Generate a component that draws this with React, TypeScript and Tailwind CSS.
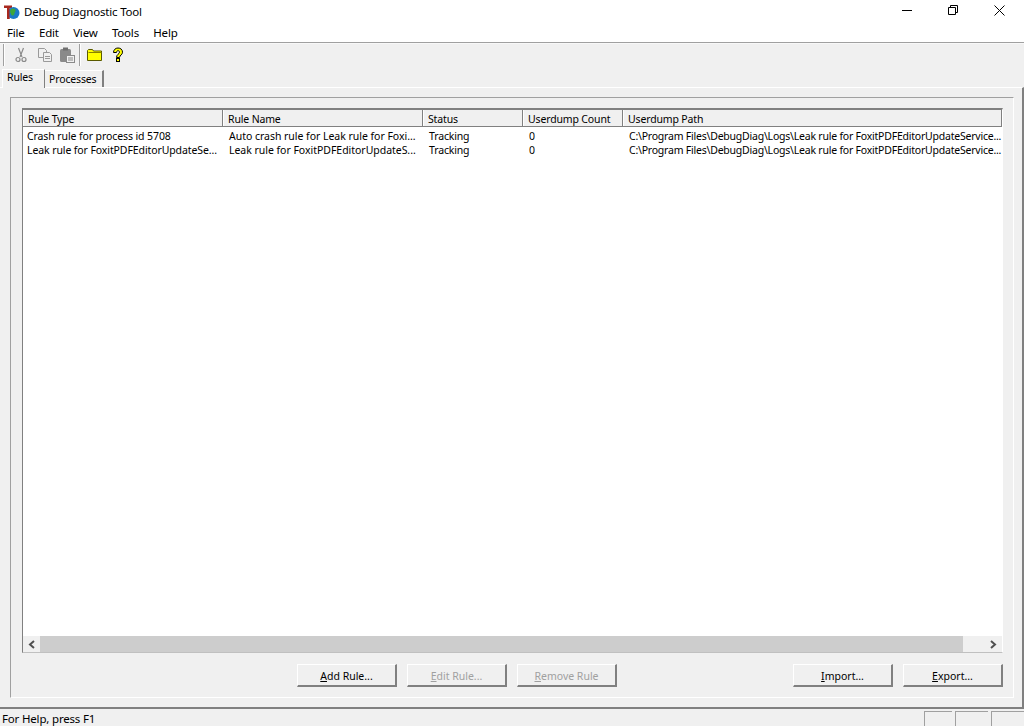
import React from "react";

const columns = [
  { label: "Rule Type", width: "w-[200px]", cell: "pl-[4px] tracking-[-0.1px]" },
  { label: "Rule Name", width: "w-[200px]", cell: "pl-[6px] tracking-[-0.03px]" },
  { label: "Status", width: "w-[100px]", cell: "pl-[6px]" },
  { label: "Userdump Count", width: "w-[100px]", cell: "pl-[6px]" },
  { label: "Userdump Path", width: "w-[379px]", cell: "pl-[6px] tracking-[-0.22px]" },
];

const rows = [
  [
    "Crash rule for process id 5708",
    "Auto crash rule for Leak rule for Foxi...",
    "Tracking",
    "0",
    "C:\\Program Files\\DebugDiag\\Logs\\Leak rule for FoxitPDFEditorUpdateService...",
  ],
  [
    "Leak rule for FoxitPDFEditorUpdateSe...",
    "Leak rule for FoxitPDFEditorUpdateS...",
    "Tracking",
    "0",
    "C:\\Program Files\\DebugDiag\\Logs\\Leak rule for FoxitPDFEditorUpdateService...",
  ],
];

const AppIcon = () => (
  <svg width="18" height="18" viewBox="0 0 18 18">
    <path d="M2 2.500h8v2.500H7.500V16H5V5H2z" fill="#a8281e" />
    <circle cx="11.500" cy="10" r="6" fill="#1c78c8" />
    <path d="M8.500 6.500c2-1.500 4.500-1 5 .500s-1 2-1 3.500-2 3-3 1.500-2-4-1-5.500z" fill="#3da63a" />
    <path d="M5 5h2.500v11H5z" fill="#a8281e" />
  </svg>
);

const CutIcon = () => (
  <svg width="16" height="16" viewBox="0 0 16 16" fill="none" stroke="#8a8a8a" strokeWidth="1.200">
    <path d="M5.500 1l3.500 9M10.500 1L7 10" />
    <circle cx="5" cy="12.500" r="2" />
    <circle cx="11" cy="12.500" r="2" />
  </svg>
);

const CopyIcon = () => (
  <svg width="16" height="16" viewBox="0 0 16 16" fill="#f0f0f0" stroke="#9a9a9a">
    <path d="M1.500 1.500h6l2 2v7h-8z" />
    <path d="M6.500 5.500h6l2 2v7h-8z" />
    <path d="M8 9.500h5M8 11.500h5" strokeWidth="1" />
  </svg>
);

const PasteIcon = () => (
  <svg width="16" height="16" viewBox="0 0 16 16">
    <rect x="1" y="2" width="11" height="13" rx="1.500" fill="#8a8a8a" />
    <rect x="4" y="0.500" width="5" height="3" fill="#6e6e6e" />
    <rect x="7.500" y="8.500" width="8" height="7" fill="#f0f0f0" stroke="#8a8a8a" />
    <path d="M9 11h5M9 13h5" stroke="#8a8a8a" />
  </svg>
);

const FolderIcon = () => (
  <svg width="16" height="12" viewBox="0 0 16 12">
    <path d="M.5 11.500v-10l1-1h4l1 1.500h8v9.500z" fill="#ffff00" stroke="#5a5a00" />
    <path d="M1.500 3.500h13" stroke="#8a8200" />
  </svg>
);

const HelpIcon = () => (
  <svg width="12" height="16" viewBox="0 0 12 16">
    <path
      d="M1.500 5.500C1.500 2.800 3.500 1 6 1s4.500 1.500 4.500 4.200S7.800 8 7.500 10.500h-3c0-3.200 3-3.500 3-5.300 0-1-.6-1.500-1.500-1.500s-1.500.8-1.500 1.800z"
      fill="#ffff00"
      stroke="#000"
    />
    <rect x="4.500" y="11.500" width="3" height="3" fill="#ffff00" stroke="#000" />
  </svg>
);

const Separator = () => (
  <div className="w-[2px] h-[22px] border-l border-[#a0a0a0] border-r-1 border-r-white" />
);

const Button = ({
  hot,
  rest,
  disabled,
}: {
  hot: string;
  rest: string;
  disabled?: boolean;
}) => (
  <div
    className={`w-[100px] h-[23px] flex items-center justify-center pt-[4px] tracking-normal bg-[#f0f0f0] border-t border-l border-white border-r-2 border-b-2 border-r-[#808080] border-b-[#808080] ${
      disabled ? "text-[#a0a0a0]" : "text-black"
    }`}
  >
    <span>
      <span className="underline">{hot}</span>
      {rest}
    </span>
  </div>
);

export default function App() {
  return (
    <div className="w-[1024px] h-[726px] overflow-hidden flex flex-col bg-[#f0f0f0] text-[10.5px] tracking-[-0.15px] text-black font-['Noto_Sans',sans-serif]">
      <div className="h-[24px] shrink-0 bg-white flex items-center">
        <div className="ml-[2px] w-[21px] flex">
          <AppIcon />
        </div>
        <span className="text-[11.5px] tracking-[-0.18px] ml-[1px]">Debug Diagnostic Tool</span>
        <div className="ml-auto flex items-center pr-[2px]">
          <div className="w-[46px] h-[24px] pb-[4px] flex items-center justify-center">
            <div className="w-[10px] h-[1px] bg-black" />
          </div>
          <div className="w-[46px] h-[24px] pb-[4px] flex items-center justify-center">
            <svg width="10" height="10" viewBox="0 0 10 10" fill="none" stroke="#000">
              <path d="M.5 2.500h7v7h-7zM2.500 2.500v-2h7v7h-2" />
            </svg>
          </div>
          <div className="w-[46px] h-[24px] pb-[4px] flex items-center justify-center">
            <svg width="11" height="11" viewBox="0 0 11 11" fill="none" stroke="#000">
              <path d="M.5.500l10 10M10.500.500l-10 10" />
            </svg>
          </div>
        </div>
      </div>

      <div className="h-[18px] shrink-0 bg-white flex items-center text-[11.5px] tracking-[-0.18px] pl-[7px] gap-[14.3px]">
        <span>File</span>
        <span>Edit</span>
        <span>View</span>
        <span>Tools</span>
        <span>Help</span>
      </div>
      <div className="h-[2px] shrink-0 bg-[#a0a0a0] border-b border-[#f8f8f8]" />

      <div className="h-[24px] shrink-0 flex items-center pl-[3px] pb-[2px]">
        <Separator />
        <div className="ml-[8px] flex"><CutIcon /></div>
        <div className="ml-[8px] flex"><CopyIcon /></div>
        <div className="ml-[6px] flex"><PasteIcon /></div>
        <div className="ml-[4px]"><Separator /></div>
        <div className="ml-[6px] flex"><FolderIcon /></div>
        <div className="ml-[9px] flex"><HelpIcon /></div>
      </div>

      <div className="h-[19px] shrink-0 flex items-end pl-[2px] relative z-10">
        <div className="w-[43px] h-[19px] pl-[4px] leading-[14px] bg-[#f0f0f0] border-t border-l border-white border-r border-r-[#808080] -mb-[1px]">
          Rules
        </div>
        <div className="w-[59px] h-[17px] pl-[4px] pt-[1px] border-t border-white border-r-2 border-r-[#808080] flex items-center whitespace-nowrap">
          Processes
        </div>
      </div>

      <div className="flex-1 min-h-0 border-t border-white border-r-2 border-r-[#808080] border-b-2 border-b-[#808080] pl-[10px] pr-[8px] pt-[9px] pb-[9px] flex">
        <div className="flex-1 min-w-0 border-t border-l border-[#a0a0a0] border-r border-b border-r-white border-b-white pl-[11px] pr-[10px] pt-[10px] flex flex-col">
          <div className="h-[545px] shrink-0 border-t-2 border-t-[#808080] border-l border-l-[#808080] border-r border-r-white border-b border-b-[#c0c0c0] bg-white flex flex-col">
            <div className="h-[17px] shrink-0 flex bg-[#f0f0f0] border-b border-[#808080]">
              {columns.map((c) => (
                <div
                  key={c.label}
                  className={`${c.width} shrink-0 pl-[4px] pt-[4px] flex items-center border-l border-white border-r border-r-[#808080] whitespace-nowrap`}
                >
                  {c.label}
                </div>
              ))}
            </div>
            <div className="flex-1 min-h-0 pt-[3px]">
              {rows.map((row, i) => (
                <div key={i} className="h-[14px] flex items-center">
                  {row.map((cell, j) => (
                    <div
                      key={j}
                      className={`${columns[j].width} ${columns[j].cell} shrink-0 whitespace-nowrap`}
                    >
                      {cell}
                    </div>
                  ))}
                </div>
              ))}
            </div>
            <div className="h-[16px] shrink-0 flex bg-[#f0f0f0]">
              <div className="w-[17px] flex items-center justify-center">
                <svg width="8" height="9" viewBox="0 0 8 9" fill="none" stroke="#505050" strokeWidth="2">
                  <path d="M6 1L2 4.500 6 8" />
                </svg>
              </div>
              <div className="w-[923px] bg-[#cdcdcd]" />
              <div className="flex-1 flex items-center justify-end pr-[5px]">
                <svg width="8" height="9" viewBox="0 0 8 9" fill="none" stroke="#505050" strokeWidth="2">
                  <path d="M2 1l4 3.500L2 8" />
                </svg>
              </div>
            </div>
          </div>

          <div className="flex mt-[11px] pl-[275px]">
            <Button hot="A" rest="dd Rule..." />
            <div className="ml-[10px]"><Button hot="E" rest="dit Rule..." disabled /></div>
            <div className="ml-[10px]"><Button hot="R" rest="emove Rule" disabled /></div>
            <div className="ml-[176px]"><Button hot="I" rest="mport..." /></div>
            <div className="ml-[10px]"><Button hot="E" rest="xport..." /></div>
          </div>
        </div>
      </div>

      <div className="h-[17px] shrink-0 flex items-center pl-[2px] pt-[2px] text-[11.5px] tracking-[-0.18px]">
        <span>For Help, press F1</span>
        <div className="ml-auto flex self-end gap-[3px]">
          <div className="w-[28px] h-[15px] border-t border-l border-[#a0a0a0]" />
          <div className="w-[33px] h-[15px] border-t border-l border-[#a0a0a0]" />
          <div className="w-[33px] h-[15px] border-t border-l border-[#a0a0a0]" />
        </div>
      </div>
    </div>
  );
}
